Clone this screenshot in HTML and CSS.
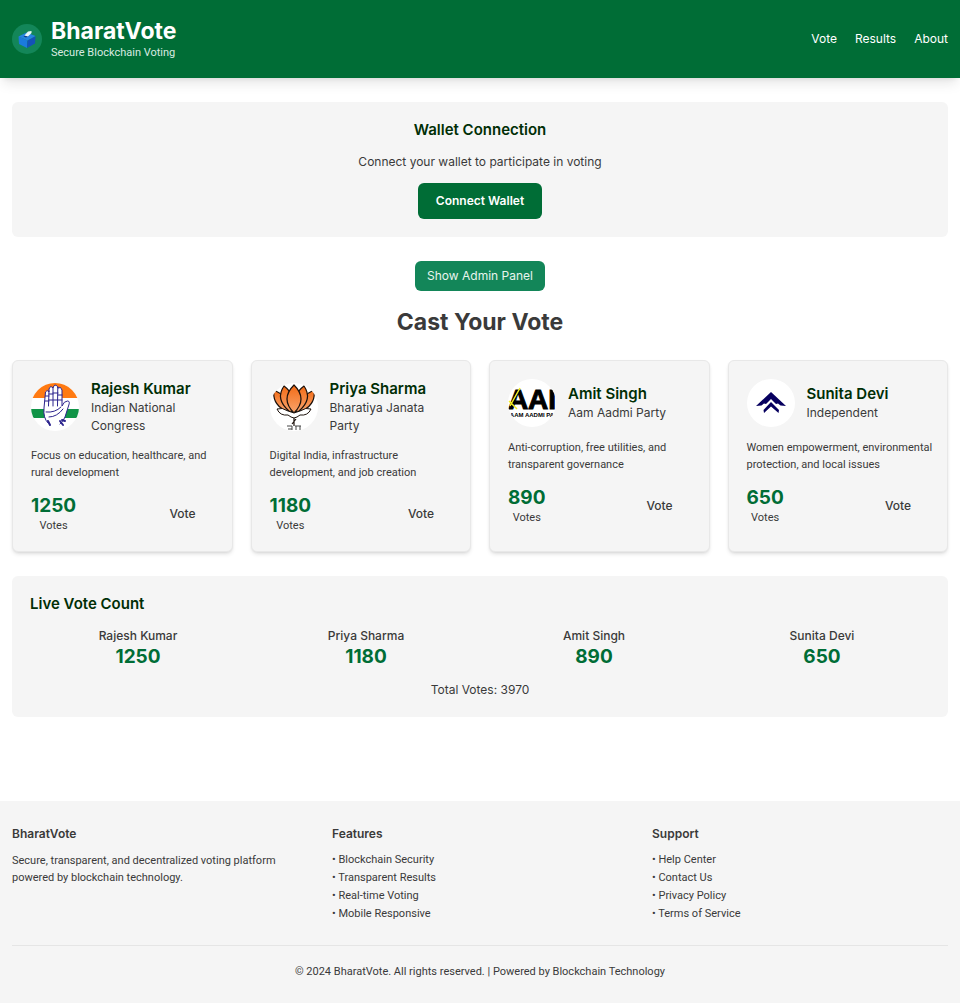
FILE: index.html
```html
<!DOCTYPE html>
<html lang="en">
<head>
<meta charset="utf-8">
<meta name="viewport" content="width=device-width, initial-scale=1">
<title>BharatVote</title>
<link rel="stylesheet" href="styles.css">
</head>
<body>
<header class="site-header">
  <div class="brand">
    <div class="brand-icon">
      <svg viewBox="0 0 20 20" width="20" height="20" aria-hidden="true">
        <path d="M1.500 7.500 10.500 11.500 10 19 2 15z" fill="#1b7bdc"/>
        <path d="M10.500 11.500 18.500 7 18 14.500 10 19z" fill="#1452b8"/>
        <path d="M1.500 7.500 9.500 3.500 18.500 7 10.500 11.500z" fill="#2584e0"/>
        <path d="M6.500 7.500 9 8.600 12.500 6.700 10 5.700z" fill="#0d3d85"/>
        <path d="M7.500 6.500 11 2.500 14.500 2 14.500 4 11 7.500z" fill="#e8f6f7"/>
      </svg>
    </div>
    <div>
      <h1 class="brand-name">BharatVote</h1>
      <p class="brand-tag">Secure Blockchain Voting</p>
    </div>
  </div>
  <nav class="nav">
    <a href="#vote">Vote</a>
    <a href="#results">Results</a>
    <a href="#about">About</a>
  </nav>
</header>

<main class="main">
  <section class="panel wallet">
    <h2 class="panel-title">Wallet Connection</h2>
    <p>Connect your wallet to participate in voting</p>
    <button class="btn btn-primary" type="button">Connect Wallet</button>
  </section>

  <button class="btn btn-admin" type="button">Show Admin Panel</button>

  <h2 class="page-title" id="vote">Cast Your Vote</h2>

  <section class="cards">
    <article class="card">
      <div class="card-head">
        <svg class="avatar" viewBox="0 0 48 48" aria-hidden="true">
          <path d="M0 0h48v15H0z" fill="#ff7a12"/>
          <path d="M0 26h48v9H0z" fill="#109447"/>
          <g fill="#fff" stroke="#2b238d" stroke-width="1" stroke-linejoin="round" stroke-linecap="round">
            <path d="M17 40Q12 35 13 25L14.500 9Q16 6 18 9L18 6Q19.500 2 22 5Q23.500 0 26.500 3.500L27 5Q30 3 31 7L31 23Q33 18 36.500 18Q39.500 18 37.500 23L34 34Q32 39 29 41Z" stroke="none"/>
            <path d="M17 40Q12 35 13 25L14.500 9Q16 6 18 9L18 6Q19.500 2 22 5Q23.500 0 26.500 3.500L27 5Q30 3 31 7L31 23Q33 18 36.500 18Q39.500 18 37.500 23L34 34Q32 39 29 41" fill="none"/>
            <path d="M18 8 17.500 23M22 5 22 23M26.800 4 26.500 23M14.500 13 18 13M18 11 22 11M22 10 27 10M27 12 31 12M14 18 18 18M18 17 31 17M15 29Q24 30 30 24M18 34Q26 34 32 26" fill="none"/>
            <path d="M17 38 19 42M29 38 32 42M31 37 34 38" stroke-width="2"/>
          </g>
        </svg>
        <div>
          <h3 class="name">Rajesh Kumar</h3>
          <p class="party">Indian National Congress</p>
        </div>
      </div>
      <p class="desc">Focus on education, healthcare, and rural development</p>
      <div class="card-foot">
        <div class="tally"><strong class="count">1250</strong><span>Votes</span></div>
        <button class="btn btn-vote" type="button">Vote</button>
      </div>
    </article>

    <article class="card">
      <div class="card-head">
        <svg class="avatar" viewBox="0 0 48 48" aria-hidden="true">
          <defs>
            <linearGradient id="petal" x1="0" y1="0" x2="0" y2="1">
              <stop offset="0" stop-color="#f36b16"/>
              <stop offset="1" stop-color="#f9a46c"/>
            </linearGradient>
          </defs>
          <g stroke="#1d120c" stroke-width="1.200" stroke-linejoin="round">
            <path d="M4 7Q2 20 14 27L22 28Q16 12 4 7z" fill="url(#petal)"/>
            <path d="M44 7Q46 20 34 27L26 28Q32 12 44 7z" fill="url(#petal)"/>
            <path d="M14 3Q5 16 19 28L24 29Q26 12 14 3z" fill="url(#petal)"/>
            <path d="M34 3Q43 16 29 28L24 29Q22 12 34 3z" fill="url(#petal)"/>
            <path d="M24 2Q10 16 24 30Q38 16 24 2z" fill="url(#petal)"/>
            <path d="M7 26Q12 24 18 28L24 30 30 28Q36 24 41 26Q38 33 30 32L27 34Q24 36 21 34L18 32Q10 33 7 26z" fill="#fff" stroke-width="1"/>
            <path d="M24 35V43M26 36 22 41" fill="none"/>
          </g>
          <path d="M17 43h5M18 46h4M22 43v4M25 43h6M26 43v4M30 43v4" stroke="#444" stroke-width="1"/>
        </svg>
        <div>
          <h3 class="name">Priya Sharma</h3>
          <p class="party">Bharatiya Janata Party</p>
        </div>
      </div>
      <p class="desc">Digital India, infrastructure development, and job creation</p>
      <div class="card-foot">
        <div class="tally"><strong class="count">1180</strong><span>Votes</span></div>
        <button class="btn btn-vote" type="button">Vote</button>
      </div>
    </article>

    <article class="card">
      <div class="card-head">
        <svg class="avatar" viewBox="0 0 48 48" aria-hidden="true">
          <text class="logo-big" x="24" y="30" text-anchor="middle">AAI</text>
          <path d="M12 9 2 27M1 22 9 30" stroke="#f4ee22" stroke-width="1.500"/>
          <text class="logo-small" x="24" y="38" text-anchor="middle">AAM AADMI PA</text>
        </svg>
        <div>
          <h3 class="name">Amit Singh</h3>
          <p class="party">Aam Aadmi Party</p>
        </div>
      </div>
      <p class="desc">Anti-corruption, free utilities, and transparent governance</p>
      <div class="card-foot">
        <div class="tally"><strong class="count">890</strong><span>Votes</span></div>
        <button class="btn btn-vote" type="button">Vote</button>
      </div>
    </article>

    <article class="card">
      <div class="card-head">
        <svg class="avatar" viewBox="0 0 48 48" aria-hidden="true">
          <g fill="#07005f">
            <path d="M24 13 39 27 33.500 26.500 31 24.500 29 25 24 20 19 25 17 24.500 14.500 26.500 9 27z"/>
            <path d="M24 23 32 31 31.500 34 24 27.500 17 34 16.500 31z"/>
          </g>
        </svg>
        <div>
          <h3 class="name">Sunita Devi</h3>
          <p class="party">Independent</p>
        </div>
      </div>
      <p class="desc">Women empowerment, environmental protection, and local issues</p>
      <div class="card-foot">
        <div class="tally"><strong class="count">650</strong><span>Votes</span></div>
        <button class="btn btn-vote" type="button">Vote</button>
      </div>
    </article>
  </section>

  <section class="panel" id="results">
    <h2 class="panel-title">Live Vote Count</h2>
    <div class="results">
      <div><p class="result-name">Rajesh Kumar</p><p class="count">1250</p></div>
      <div><p class="result-name">Priya Sharma</p><p class="count">1180</p></div>
      <div><p class="result-name">Amit Singh</p><p class="count">890</p></div>
      <div><p class="result-name">Sunita Devi</p><p class="count">650</p></div>
    </div>
    <p class="total">Total Votes: 3970</p>
  </section>
</main>

<footer class="footer" id="about">
  <div class="footer-cols">
    <div>
      <h4>BharatVote</h4>
      <p class="about">Secure, transparent, and decentralized voting platform powered by blockchain technology.</p>
    </div>
    <div>
      <h4>Features</h4>
      <ul>
        <li>• Blockchain Security</li>
        <li>• Transparent Results</li>
        <li>• Real-time Voting</li>
        <li>• Mobile Responsive</li>
      </ul>
    </div>
    <div>
      <h4>Support</h4>
      <ul>
        <li>• Help Center</li>
        <li>• Contact Us</li>
        <li>• Privacy Policy</li>
        <li>• Terms of Service</li>
      </ul>
    </div>
  </div>
  <p class="copyright">© 2024 BharatVote. All rights reserved. | Powered by Blockchain Technology</p>
</footer>
</body>
</html>
```
FILE: styles.css
```css
* { box-sizing: border-box; margin: 0; padding: 0; }

body {
  font-family: Inter, "Liberation Sans", sans-serif;
  font-size: 12px;
  line-height: 18px;
  color: #3a3a3a;
  background: #fff;
}

button { font: inherit; border: 0; cursor: pointer; }
ul { list-style: none; }

.brand-tag, .desc, .tally, .about, .footer ul, .copyright {
  font-family: Roboto, "Liberation Sans", sans-serif;
  font-size: 11px;
}

.site-header {
  display: flex;
  align-items: center;
  justify-content: space-between;
  padding: 18px 12px;
  color: #fff;
  background: #006d36;
  box-shadow: 0 8px 12px -3px rgba(0, 0, 0, 0.1), 0 4px 5px -4px rgba(0, 0, 0, 0.1);
}
.brand { display: flex; align-items: center; gap: 9px; }
.brand-icon {
  display: grid;
  place-items: center;
  width: 30px;
  height: 30px;
  border-radius: 50%;
  background: #138659;
}
.brand-name { font-size: 23px; line-height: 27px; font-weight: 700; }
.brand-tag { line-height: 15px; color: #d9eae1; }
.nav { display: flex; gap: 18px; }
.nav a { color: #fff; text-decoration: none; }

.main { padding: 24px 12px; }

.panel { padding: 18px; border-radius: 6px; background: #f5f5f5; }
.panel-title, .name {
  font-size: 15px;
  line-height: 20px;
  font-weight: 600;
  color: #002e05;
}
.panel-title { margin-bottom: 13px; }
.wallet { text-align: center; }

.btn { display: block; border-radius: 6px; line-height: 18px; }
.btn-primary {
  margin: 12px auto 0;
  padding: 9px 18px;
  font-weight: 600;
  color: #fff;
  background: #006d36;
}
.btn-admin {
  margin: 24px auto 18px;
  padding: 6px 12px;
  color: #e8f5ee;
  background: #138659;
}
.btn-vote {
  padding: 9px 18px;
  font-weight: 500;
  color: #3a3a3a;
  background: transparent;
}

.page-title {
  margin-bottom: 24px;
  font-size: 23px;
  line-height: 27px;
  font-weight: 700;
  text-align: center;
}

.cards {
  display: grid;
  grid-template-columns: repeat(auto-fit, minmax(200px, 1fr));
  gap: 18px;
  margin-bottom: 24px;
}
.card {
  padding: 18px;
  border: 1px solid #e8e8e8;
  border-radius: 6px;
  background: #f5f5f5;
  box-shadow: 0 3px 4px -1px rgba(0, 0, 0, 0.12), 0 1px 3px -1px rgba(0, 0, 0, 0.1);
}
.card-head { display: flex; align-items: center; gap: 12px; margin-bottom: 12px; }
.avatar {
  flex: none;
  width: 48px;
  height: 48px;
  border-radius: 50%;
  background: #fff;
}
.logo-big { font: 900 28px "Liberation Sans", sans-serif; fill: #000; stroke: #000; stroke-width: 1px; }
.logo-small { font: 700 6px "Liberation Sans", sans-serif; fill: #000; }
.desc { margin: 0 -9px 13px 0; line-height: 17px; }
.card-foot { display: flex; align-items: center; justify-content: space-between; }
.tally { line-height: 15px; text-align: center; }
.count {
  display: block;
  font-family: Inter, "Liberation Sans", sans-serif;
  font-size: 19px;
  line-height: 24px;
  font-weight: 700;
  color: #006d36;
}

.results {
  display: grid;
  grid-template-columns: repeat(4, 1fr);
  gap: 12px;
  text-align: center;
}
.result-name { font-weight: 500; }
.total { margin-top: 12px; text-align: center; }

.footer { margin-top: 60px; padding: 24px 12px; background: #f5f5f5; }
.footer-cols { display: grid; grid-template-columns: repeat(3, 1fr); gap: 24px; }
.footer h4 { margin-bottom: 9px; font-size: 12px; font-weight: 600; }
.about { line-height: 17px; }
.footer ul { display: grid; gap: 3px; line-height: 15px; }
.copyright {
  margin-top: 24px;
  padding-top: 18px;
  border-top: 1px solid #e5e5e5;
  line-height: 15px;
  text-align: center;
}
```
